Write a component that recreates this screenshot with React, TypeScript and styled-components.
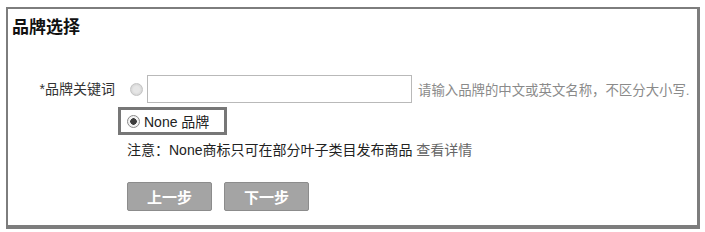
import React from "react";
import styled, { createGlobalStyle } from "styled-components";

const Global = createGlobalStyle`
  html, body {
    margin: 0;
    padding: 0;
    background: #fff;
  }
  body {
    font-family: "Liberation Sans", "Noto Sans CJK SC", sans-serif;
  }
`;

const Frame = styled.div`
  box-sizing: border-box;
  margin: 7px 0 0 6px;
  width: 694px;
  height: 222px;
  border: 2px solid #7d7d7d;
  border-right-width: 3px;
  border-bottom-width: 4px;
  overflow: hidden;
  background: #fff;
`;

const Title = styled.div`
  padding: 8px 4px;
  font-size: 17px;
  line-height: 22px;
  font-weight: bold;
  color: #111;
`;

const Form = styled.div`
  display: grid;
  grid-template-columns: 109px 1fr;
  column-gap: 10px;
  margin-top: 28px;
`;

const Label = styled.div`
  font-size: 14px;
  line-height: 28px;
  color: #333;
  text-align: right;
  padding-right: 2px;
  white-space: nowrap;
`;

const Cell = styled.div<{ $top?: number }>`
  grid-column: 2;
  display: flex;
  align-items: center;
  margin-top: ${({ $top }) => $top ?? 0}px;
  white-space: nowrap;
`;

const Radio = styled.span<{ $checked?: boolean }>`
  box-sizing: border-box;
  flex: none;
  width: 13px;
  height: 13px;
  border-radius: 50%;
  border: 1px solid ${({ $checked }) => ($checked ? "#8a8a8a" : "#c4c4c4")};
  background: ${({ $checked }) =>
    $checked
      ? "radial-gradient(circle, #3d3d3d 0 3px, #f2f2f2 3.5px)"
      : "radial-gradient(circle, #e6e6e6 0 3px, #d4d4d4 6px)"};
`;

const Input = styled.div`
  box-sizing: border-box;
  width: 265px;
  height: 28px;
  margin-left: 4px;
  border: 1px solid #b9b9b9;
  background: #fff;
`;

const Hint = styled.span`
  margin-left: 6px;
  font-size: 13.4px;
  color: #8a8a8a;
`;

const Highlight = styled.div`
  box-sizing: border-box;
  display: flex;
  align-items: center;
  gap: 4px;
  width: 109px;
  height: 28px;
  margin-left: -9px;
  padding-left: 6px;
  border: 3px solid #777;
  font-size: 14px;
  color: #222;
`;

const Notice = styled.div`
  font-size: 14px;
  line-height: 20px;
  color: #222;
`;

const Link = styled.span`
  color: #666;
`;

const Button = styled.button`
  box-sizing: border-box;
  width: 85px;
  height: 29px;
  padding: 0;
  border: 1px solid #8c8c8c;
  border-radius: 2px;
  background: #a4a4a4;
  color: #fff;
  font-family: "Liberation Sans", "Noto Sans CJK SC", sans-serif;
  font-size: 15px;
  font-weight: bold;
  & + & {
    margin-left: 12px;
  }
`;

export default function App() {
  return (
    <>
      <Global />
      <Frame>
        <Title>品牌选择</Title>
        <Form>
          <Label>*品牌关键词</Label>
          <Cell>
            <Radio style={{ marginLeft: 3 }} />
            <Input />
            <Hint>请输入品牌的中文或英文名称，不区分大小写.</Hint>
          </Cell>
          <Cell $top={4}>
            <Highlight>
              <Radio $checked />
              <span>None 品牌</span>
            </Highlight>
          </Cell>
          <Cell $top={5}>
            <Notice>
              注意：None商标只可在部分叶子类目发布商品 <Link>查看详情</Link>
            </Notice>
          </Cell>
          <Cell $top={22}>
            <Button>上一步</Button>
            <Button>下一步</Button>
          </Cell>
        </Form>
      </Frame>
    </>
  );
}
